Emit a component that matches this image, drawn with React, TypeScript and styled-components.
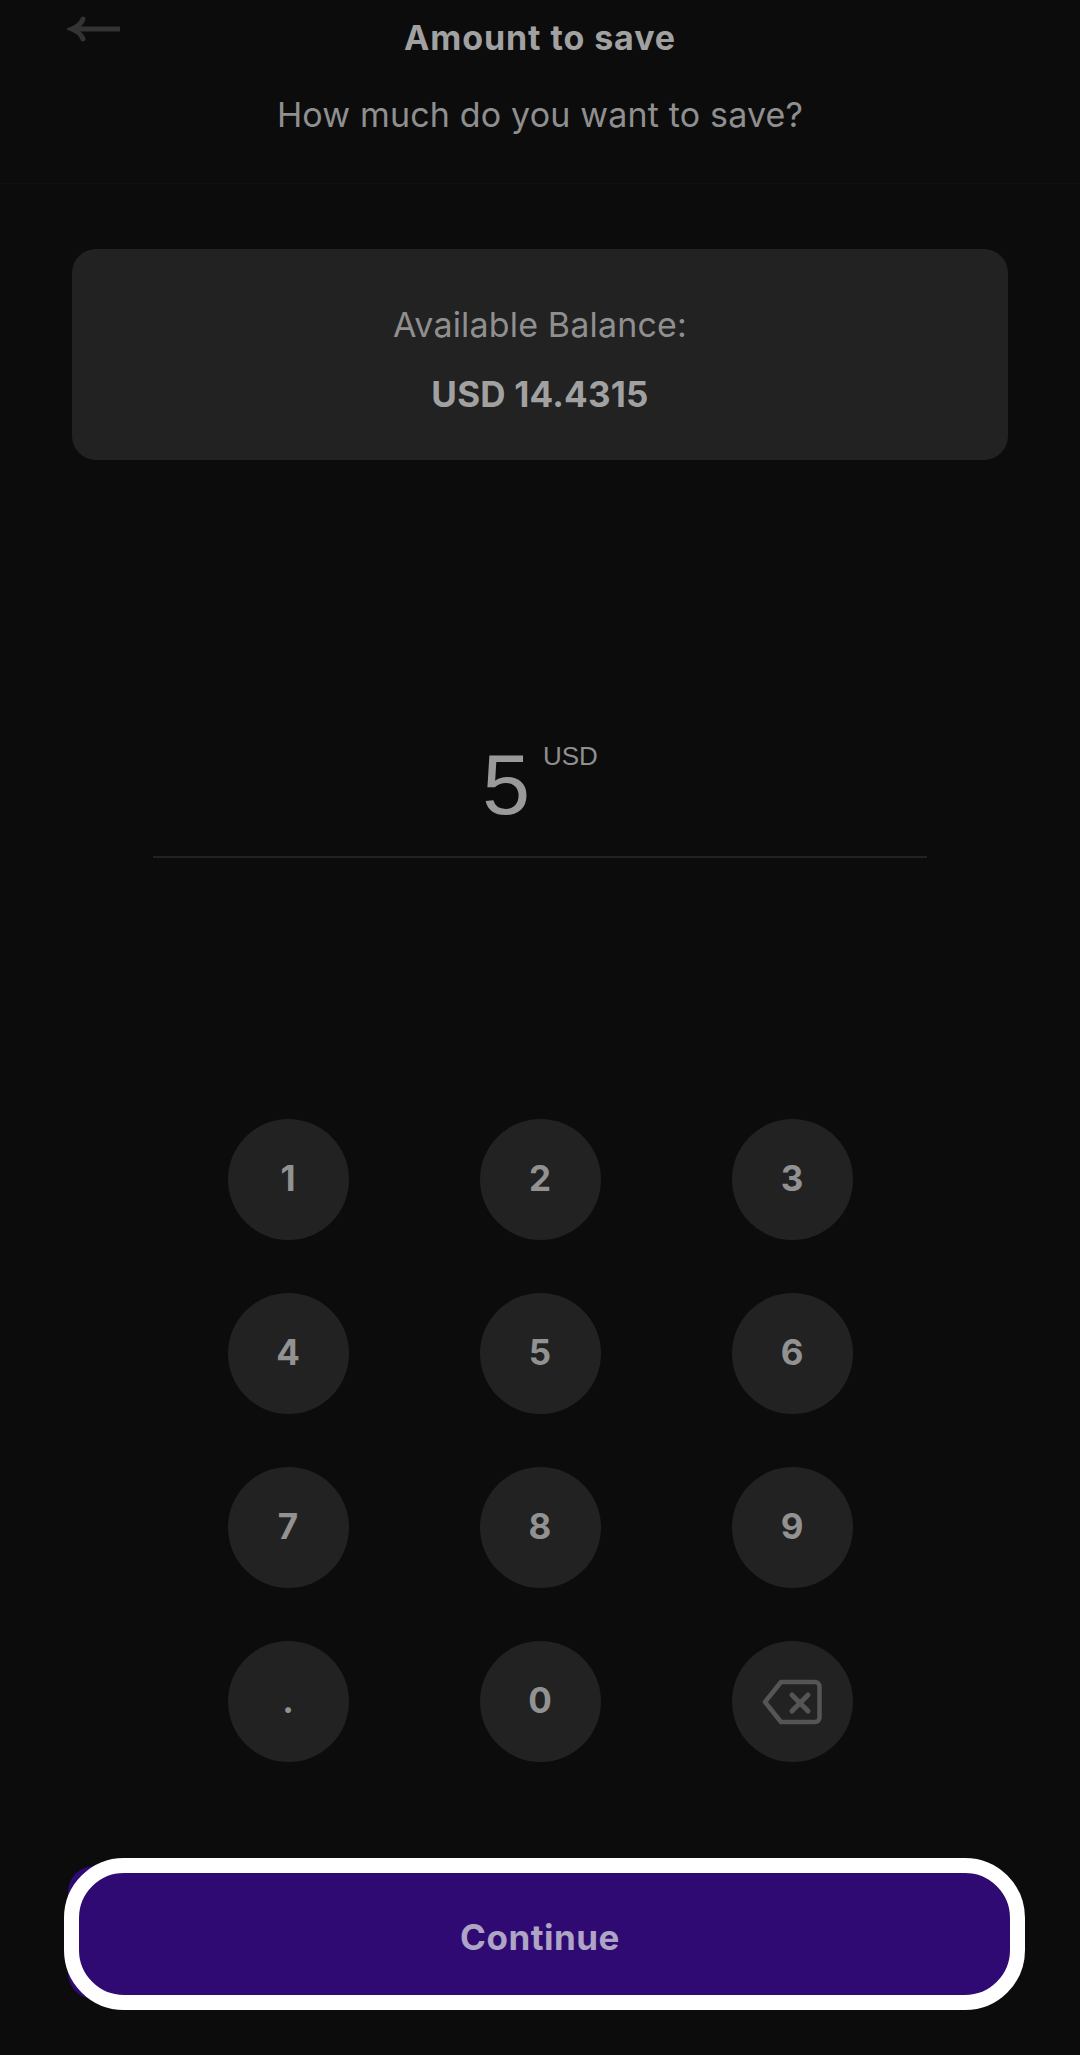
import React from "react";
import styled, { createGlobalStyle } from "styled-components";

const Global = createGlobalStyle`
  html, body { margin: 0; padding: 0; background: #0c0c0c; }
`;

const Page = styled.div`
  width: 1080px;
  height: 2055px;
  background: #0c0c0c;
  overflow: hidden;
  display: flex;
  flex-direction: column;
  font-family: "Inter", "Liberation Sans", sans-serif;
`;

const Header = styled.header`
  position: relative;
  height: 184px;
  border-bottom: 1px solid #101010;
  display: flex;
  flex-direction: column;
  align-items: center;
  padding-top: 17px;
  box-sizing: border-box;
`;

const Back = styled.svg`
  position: absolute;
  left: 67px;
  top: 14px;
  width: 58px;
  height: 30px;
`;

const Title = styled.h1`
  margin: 0;
  font-size: 34px;
  line-height: 42px;
  font-weight: 700;
  letter-spacing: 0.9px;
  color: #a1a1a1;
`;

const Subtitle = styled.p`
  margin: 35px 0 0;
  font-size: 34px;
  line-height: 42px;
  font-weight: 400;
  letter-spacing: 0.17px;
  color: #8f8f8f;
`;

const Card = styled.section`
  margin: 65px 72px 0;
  height: 211px;
  box-sizing: border-box;
  background: #222222;
  border-radius: 24px;
  display: flex;
  flex-direction: column;
  align-items: center;
  padding-top: 55px;
`;

const CardLabel = styled.div`
  font-size: 34px;
  line-height: 42px;
  letter-spacing: 0.17px;
  color: #8f8f8f;
`;

const CardValue = styled.div`
  margin-top: 27px;
  font-size: 35px;
  line-height: 42px;
  font-weight: 700;
  letter-spacing: 0.2px;
  color: #a1a1a1;
`;

const AmountField = styled.div`
  margin: 281px 153px 0;
  height: 115px;
  border-bottom: 2px solid #222222;
  display: flex;
  justify-content: center;
  align-items: flex-start;
  gap: 13px;
`;

const AmountValue = styled.span`
  font-family: "Liberation Sans", sans-serif;
  font-size: 86px;
  line-height: 84px;
  margin-top: 1px;
  color: #9a9a9a;
`;

const AmountUnit = styled.span`
  font-family: "Liberation Sans", sans-serif;
  font-size: 26px;
  line-height: 30px;
  color: #8f8f8f;
`;

const Keypad = styled.div`
  margin-top: 261px;
  display: grid;
  grid-template-columns: repeat(3, 121px);
  grid-auto-rows: 121px;
  column-gap: 131px;
  row-gap: 53px;
  justify-content: center;
`;

const Key = styled.button`
  width: 121px;
  height: 121px;
  padding: 0 0 4px;
  border: 0;
  border-radius: 50%;
  background: #222222;
  color: #929292;
  font-family: inherit;
  font-size: 35px;
  font-weight: 700;
  display: flex;
  align-items: center;
  justify-content: center;
`;

const BackspaceIcon = styled.svg`
  width: 60px;
  height: 46px;
  margin-top: 4px;
`;

const Footer = styled.div`
  position: relative;
  margin: 104px 0 0;
  padding: 0 68px;
`;

const Continue = styled.button`
  position: relative;
  width: 100%;
  height: 133px;
  padding: 9px 0 0;
  border: 0;
  border-radius: 26px;
  background: #2f0a72;
  color: #aea4c4;
  font-family: inherit;
  font-size: 35px;
  font-weight: 700;
  letter-spacing: 0.5px;
  &::after {
    content: "";
    position: absolute;
    left: -4px;
    top: -8px;
    width: 931px;
    height: 122px;
    border: 15px solid #ffffff;
    border-radius: 60px;
  }
`;

export default function App() {
  const keys = ["1", "2", "3", "4", "5", "6", "7", "8", "9", ".", "0"];
  return (
    <Page>
      <Global />
      <Header>
        <Back viewBox="0 0 58 30" fill="none" stroke="#333333" strokeWidth="5" strokeLinecap="round">
          <path d="M53 15H6" strokeLinecap="butt" />
          <path d="M16 5C14 10 10 13 5 15C10 17 14 20 16 25" />
        </Back>
        <Title>Amount to save</Title>
        <Subtitle>How much do you want to save?</Subtitle>
      </Header>
      <Card>
        <CardLabel>Available Balance:</CardLabel>
        <CardValue>USD 14.4315</CardValue>
      </Card>
      <AmountField>
        <AmountValue>5</AmountValue>
        <AmountUnit>USD</AmountUnit>
      </AmountField>
      <Keypad>
        {keys.map((k) => (
          <Key key={k}>{k}</Key>
        ))}
        <Key aria-label="Delete">
          <BackspaceIcon viewBox="0 0 60 46" fill="none" stroke="#555555" strokeWidth="4.5" strokeLinecap="round" strokeLinejoin="round">
            <path d="M3 23L19 3H53C55.5 3 57.5 5 57.5 7.5V38.5C57.5 41 55.5 43 53 43H19L3 23Z" />
            <path d="M30 16L46 32M46 16L30 32" strokeWidth="5" />
          </BackspaceIcon>
        </Key>
      </Keypad>
      <Footer>
        <Continue>Continue</Continue>
      </Footer>
    </Page>
  );
}
